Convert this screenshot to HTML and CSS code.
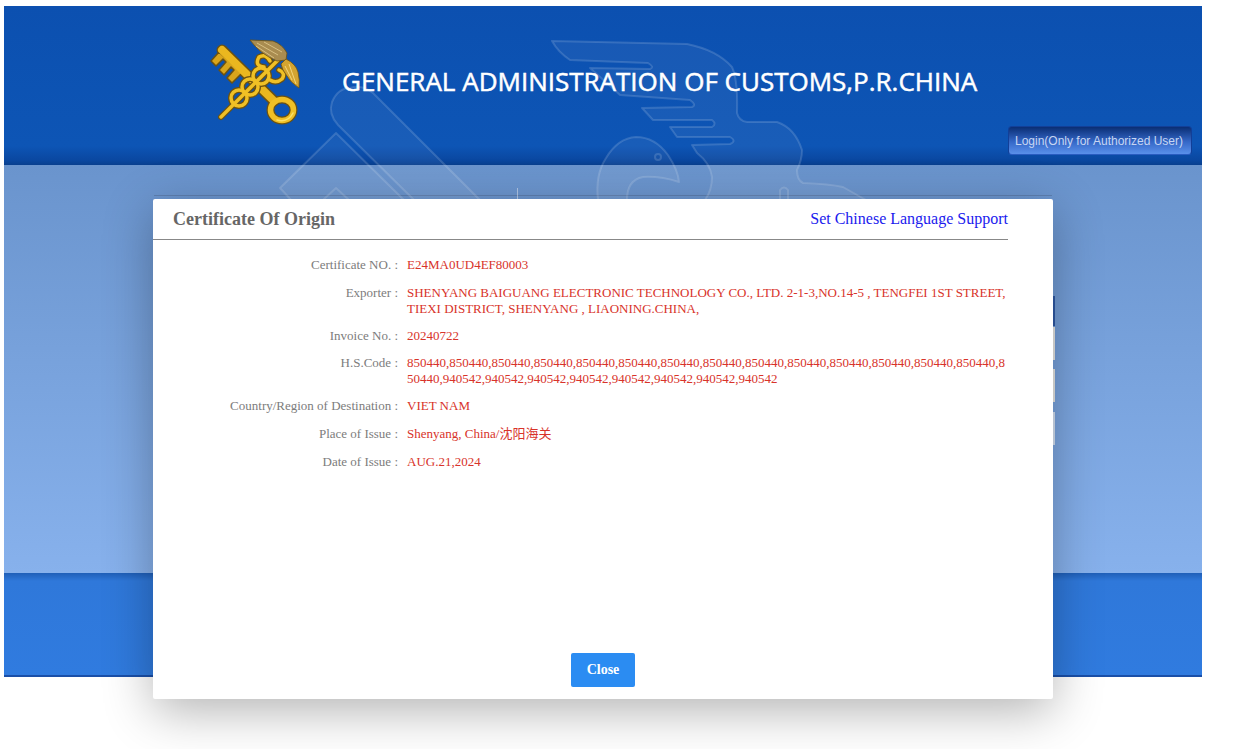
FILE: index.html
```html
<!DOCTYPE html>
<html lang="en">
<head>
  <meta charset="UTF-8" />
  <title>Certificate Of Origin</title>
  <link rel="stylesheet" href="styles.css">
</head>
<body>

  <div class="page">
    <svg class="watermark" width="1198" height="240" viewBox="4 6 1198 240">
      <g fill="rgba(255,255,255,0.05)" stroke="rgba(255,255,255,0.15)" stroke-width="2" stroke-linejoin="round">
        <path d="M552 41 L687 44 Q717 50 732 67 Q738 80 737 113 Q739 121 747 122 L777 122 Q795 128 802 150 Q802 160 797 170 Q797 180 803 183 Q830 184 843 187 L866 200 L705 200 Q712 190 712 177 Q710 163 697 153 L692 145 L730 144 Q737 141 730 137 L677 137 L670 127 L712 127 Q717 124 712 120 L653 120 L642 108 L692 107 Q697 105 690 100 L620 95 L590 68 L650 69 Q655 67 648 63 L570 60 Q558 52 552 41 Z"/>
        <path d="M598 200 Q595 175 606 158 Q618 138 636 137 Q655 137 668 155 Q678 170 679 182 Q660 176 643 177 Q627 180 627 200 Z"/>
        <circle cx="658" cy="157" r="3" fill="none"/>
        <path d="M780 200 L780 190 Q784 185 788 190 L788 200" fill="none"/>
        <path d="M373 93 L480 200 L414 200 L338 125 Q328 114 332 102 Q338 88 350 88 Q362 84 373 93 Z"/>
        <path d="M291 200 L280 188 L336 133 L404 200 Z"/>
        <path d="M323 200 L336 188 L349 200" fill="none"/>
      </g>
    </svg>

    <header class="top-bar">
      <svg class="emblem" width="130" height="120" viewBox="0 0 130 120">
        <g fill="none" stroke-linecap="round" stroke-linejoin="round">
          <!-- key -->
          <path d="M32 30 L84 81" stroke="#6d5210" stroke-width="11"/>
          <path d="M29 32 L21 41 L26 46 L33 39 L36 42 L29 50 L34 55 L41 47 L44 50 L37 58 L42 63 L52 53 Z" fill="#d8a51c" stroke="#6d5210" stroke-width="1.5"/>
          <ellipse cx="92" cy="90" rx="11.5" ry="10.5" stroke="#6d5210" stroke-width="8"/>
          <path d="M32 30 L84 81" stroke="#eab71f" stroke-width="8"/>
          <ellipse cx="92" cy="90" rx="11.5" ry="10.5" stroke="#f0c025" stroke-width="5.5"/>
          <path d="M87 100 Q98 103 103 93" stroke="#fbe06a" stroke-width="1.5"/>
          <!-- staff and snakes, over the key -->
          <g stroke="#6d5210" stroke-width="6">
            <path d="M31 97 L92 36"/>
            <circle cx="49" cy="78" r="8"/>
            <circle cx="60" cy="67" r="8"/>
            <circle cx="71" cy="56" r="8"/>
            <path d="M74 47 Q64 46 69 37 Q76 33 80 41 M80 60 Q86 64 92 59 Q96 53 89 50"/>
          </g>
          <g stroke="#f0c025" stroke-width="3.5">
            <path d="M31 97 L92 36"/>
            <circle cx="49" cy="78" r="8"/>
            <circle cx="60" cy="67" r="8"/>
            <circle cx="71" cy="56" r="8"/>
            <path d="M74 47 Q64 46 69 37 Q76 33 80 41 M80 60 Q86 64 92 59 Q96 53 89 50"/>
          </g>
        </g>
        <!-- wings -->
        <path d="M60 20 L83 21 Q92 24 97 33 L96 40 L87 41 Q70 34 60 20 Z" fill="#a98c50" stroke="#6d5210" stroke-width="0.8"/>
        <path d="M67 23 L88 35 M74 22 L92 32 M66 26 L84 38" fill="none" stroke="#d9c083" stroke-width="1"/>
        <path d="M96 39 Q106 44 108 52 Q110 60 109 68 Q100 62 97 56 Q92 50 91 44 Z" fill="#d4a430" stroke="#6d5210" stroke-width="0.8"/>
        <path d="M99 44 L106 64 M95 46 L102 60" fill="none" stroke="#f4d67a" stroke-width="1"/>
      </svg>
      <h1 class="site-title">GENERAL ADMINISTRATION OF CUSTOMS,P.R.CHINA</h1>
      <a class="login-btn">Login(Only for Authorized User)</a>
    </header>
    <div class="middle-band">
      <div class="band-rule"></div>
    </div>
    <div class="bottom-band"></div>
  </div>

  <!-- bits of the page underneath that stick out past the dialog -->
  <div class="peek peek-tick"></div>
  <div class="peek peek-dark"></div>
  <div class="peek peek-a"></div>
  <div class="peek peek-b"></div>
  <div class="peek peek-c"></div>

  <div class="dialog">
    <div class="dialog-head">
      <h2>Certificate Of Origin</h2>
      <a class="lang-link">Set Chinese Language Support</a>
    </div>

    <div class="fields">
      <div class="label">Certificate NO. :</div>
      <div class="value extra">E24MA0UD4EF80003</div>

      <div class="label">Exporter :</div>
      <div class="value">SHENYANG BAIGUANG ELECTRONIC TECHNOLOGY CO., LTD. 2-1-3,NO.14-5 , TENGFEI 1ST STREET, TIEXI DISTRICT, SHENYANG , LIAONING.CHINA,</div>

      <div class="label">Invoice No. :</div>
      <div class="value">20240722</div>

      <div class="label">H.S.Code :</div>
      <div class="value hs">850440,850440,850440,850440,850440,850440,850440,850440,850440,850440,850440,850440,850440,850440,850440,940542,940542,940542,940542,940542,940542,940542,940542</div>

      <div class="label">Country/Region of Destination :</div>
      <div class="value extra">VIET NAM</div>

      <div class="label">Place of Issue :</div>
      <div class="value extra">Shenyang, China/沈阳海关</div>

      <div class="label">Date of Issue :</div>
      <div class="value">AUG.21,2024</div>
    </div>

    <div class="dialog-foot">
      <button class="close-btn">Close</button>
    </div>
  </div>

</body>
</html>
```

FILE: styles.css
```css
html, body {
  height: 100%;
}

body {
  margin: 0;
  padding: 6px 40px 0 4px;
  box-sizing: border-box;
  background: #fff;
  overflow: hidden;
  font-family: "Liberation Serif", "Noto Sans CJK SC", serif;
}

.page {
  position: relative;
  border-bottom: 2px solid #1a4fa8;
}

.watermark {
  position: absolute;
  left: 0;
  top: 0;
  z-index: 1;
}

.top-bar {
  display: flex;
  align-items: flex-start;
  height: 159px;
  box-sizing: border-box;
  padding-left: 186px;
  background: linear-gradient(#0c50b0 0, #0d55b5 88%, #0a47a0 97%, #083f8e 100%);
}

.emblem {
  position: relative;
  z-index: 2;
  margin-top: 14px;
  flex: none;
}

.site-title {
  position: relative;
  z-index: 2;
  margin: 57px 0 0 22px;
  font-family: "Open Sans", "Noto Sans", sans-serif;
  font-size: 26px;
  line-height: 36px;
  font-weight: 400;
  color: #fff;
  -webkit-text-stroke: 0.5px #fff;
  white-space: nowrap;
}

.login-btn {
  position: relative;
  z-index: 2;
  margin: 120px 10px 0 auto;
  width: 184px;
  height: 29px;
  box-sizing: border-box;
  padding-right: 2px;
  line-height: 28px;
  text-align: center;
  font-family: "Liberation Sans", Arial, sans-serif;
  font-size: 12px;
  color: #c8d6f2;
  border-radius: 4px;
  border: 1px solid #123f98;
  border-bottom-color: #2a5cc0;
  background: linear-gradient(#0a2e74, #3568c8 55%, #5a90ea);
}

.middle-band {
  height: 408px;
  background: linear-gradient(#6a94cd, #87b1ec);
}

.band-rule {
  height: 30px;
  margin: 0 150px;
  border-bottom: 1px solid rgba(70, 90, 120, 0.35);
}

.bottom-band {
  height: 102px;
  background: linear-gradient(#1f5fb8 0, #2f78da 8px, #307bdf);
}

.dialog {
  position: absolute;
  left: 153px;
  top: 199px;
  z-index: 5;
  width: 900px;
  height: 500px;
  display: flex;
  flex-direction: column;
  background: #fff;
  border-radius: 2px;
  box-shadow: 0 12px 50px rgba(0, 0, 0, 0.3);
}

.dialog-head {
  display: flex;
  justify-content: space-between;
  align-items: center;
  height: 41px;
  margin-right: 45px;
  box-sizing: border-box;
  padding: 0 0 0 20px;
  border-bottom: 1px solid #888;
}

.dialog-head h2 {
  margin: 0;
  font-size: 18px;
  font-weight: bold;
  color: #666;
}

.lang-link {
  font-size: 16px;
  color: #1a1aee;
}

.fields {
  display: grid;
  grid-template-columns: 245px 600px;
  column-gap: 9px;
  row-gap: 11px;
  padding-top: 17px;
  font-size: 13px;
  line-height: 16px;
}

.label {
  text-align: right;
  color: #7c7c7c;
}

.value {
  color: #d8332a;
}

.extra {
  margin-bottom: 1px;
}

.hs {
  word-break: break-all;
}

.dialog-foot {
  margin-top: auto;
  padding-bottom: 12px;
  text-align: center;
}

.close-btn {
  width: 64px;
  height: 34px;
  padding: 0;
  border: none;
  border-radius: 2px;
  background: #2b8cf2;
  color: #fff;
  font-family: "Liberation Serif", serif;
  font-size: 14px;
  font-weight: bold;
}

.peek {
  position: absolute;
  left: 1053px;
  width: 2px;
  z-index: 3;
}

.peek-tick {
  left: 517px;
  top: 188px;
  width: 1px;
  height: 11px;
  background: rgba(255, 255, 255, 0.45);
}

.peek-dark {
  top: 296px;
  height: 30px;
  background: #2f5aa6;
}

.peek-a {
  top: 327px;
  height: 33px;
  background: #e8e8e6;
}

.peek-b {
  top: 369px;
  height: 33px;
  background: #e8e8e6;
}

.peek-c {
  top: 412px;
  height: 33px;
  background: #d6e2f4;
}
```
